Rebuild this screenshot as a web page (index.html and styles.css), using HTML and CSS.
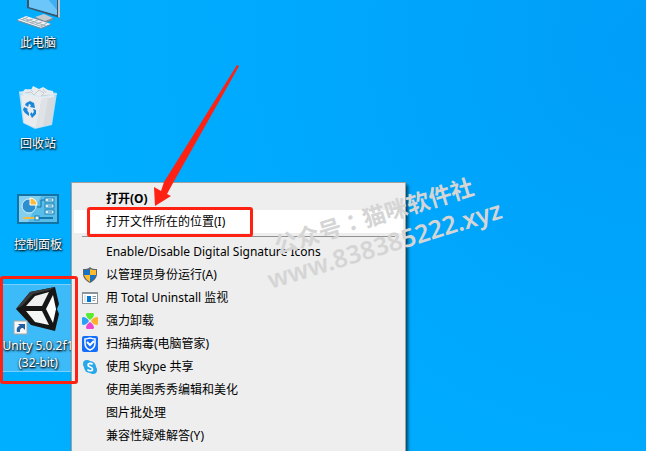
FILE: index.html
```html
<!DOCTYPE html>
<html lang="zh-CN">
<head>
    <meta charset="UTF-8">
    <meta name="viewport" content="width=device-width, initial-scale=1.0">
    <title>桌面</title>
    <link rel="stylesheet" href="styles.css">
</head>
<body>
    <main class="desktop">
        <div class="icons">
            <button class="shortcut">
                <svg class="shortcut-icon" viewBox="0 0 48 48" aria-hidden="true">
                    <polygon points="21,34 30,31 39,35 31,39" fill="#c3cbd1" />
                    <polygon points="21,34 31,38 39,35 39,37 31,40 21,36" fill="#7f8b94" />
                    <polygon points="13,0 46,6 46,35 13,25" fill="#3c5468" />
                    <polygon points="15,2 43,8 43,32 15,24" fill="#3bb0f5" />
                    <polygon points="15,2 24,4 43,27 43,32 15,24" fill="#6cc6fa" />
                    <polygon points="44,6 46,6 46,35 44,34" fill="#b9c2c8" />
                    <polygon points="3,37 12,33 37,41 27,45" fill="#eef1f3" />
                    <polygon points="3,37 27,45 37,41 37,42 27,46 3,38" fill="#7d8b96" />
                    <path d="M6 36 29 44M9 35 32 43M12 38 19 36M17 40 24 37M22 41 28 39M8 37 14 34M27 43 33 40" stroke="#a4b0b8" stroke-width="1" fill="none" />
                </svg>
                <span class="shortcut-label">此电脑</span>
            </button>

            <button class="shortcut">
                <svg class="shortcut-icon" viewBox="0 0 48 48" aria-hidden="true">
                    <polygon points="5,8 16,5 43,9 38,41 21,45 9,39" fill="#b9dff3" />
                    <polygon points="8,10 11,5 17,6 19,2 25,5 29,3 34,6 39,7 40,13 28,17 12,13" fill="#e9ecef" />
                    <path d="M11 9 17 8 20 11 25 6 30 9 27 12 36 11M17 6 19 8M29 5 32 9" stroke="#c3cad1" fill="none" />
                    <polygon points="7,11 28,15 22,44 10,39" fill="#e9ebee" />
                    <polygon points="28,15 41,13 37,40 22,44" fill="#d5dadf" />
                    <polygon points="28,15 34,15 29,42 22,44" fill="#dfe3e7" />
                    <path d="M5 8 28 13 43 10" stroke="#cfeaf7" fill="none" />
                    <g fill="#1a86d8">
                        <polygon points="12,19 16,17 20,19 21,24 16,23 17,21 15,20 14,23 11,21" />
                        <polygon points="10,23 14,25 13,26 15,29 15,32 11,29 9,26" />
                        <polygon points="19,25 22,26 22,30 19,33 18,34 16,30 18,28 18,30 20,28" />
                    </g>
                </svg>
                <span class="shortcut-label">回收站</span>
            </button>

            <button class="shortcut">
                <svg class="shortcut-icon" viewBox="0 0 48 48" aria-hidden="true">
                    <rect x="3" y="9" width="42" height="30" fill="#1273a6" />
                    <rect x="5" y="11" width="38" height="26" fill="#58bde9" />
                    <polygon points="5,11 27,11 14,37 5,37" fill="#83cff0" />
                    <circle cx="15" cy="21" r="7" fill="#2b8fd0" stroke="#d9f1fb" />
                    <path d="M16 20V13A7 7 0 0 1 23 20Z" fill="#ffb93b" stroke="#fff" stroke-width="1" />
                    <path d="M23 22H27V15H31M31 27H35" stroke="#166f9d" fill="none" />
                    <g fill="#d6f0fb" stroke="#1b83b6">
                        <rect x="31" y="13" width="9" height="4" />
                        <rect x="31" y="19" width="9" height="4" />
                        <rect x="31" y="25" width="9" height="4" />
                    </g>
                    <path d="M34 15H38M34 21H38M34 27H38" stroke="#1680bb" />
                    <path d="M9 33H22" stroke="#f4bc43" stroke-width="2" />
                    <path d="M24 33H39" stroke="#1479ad" stroke-width="2" />
                    <rect x="21" y="31" width="4" height="4" fill="#e5f6fd" stroke="#1680bb" />
                </svg>
                <span class="shortcut-label">控制面板</span>
            </button>

            <button class="shortcut selected">
                <svg class="shortcut-icon" viewBox="0 0 48 48" aria-hidden="true">
                    <polygon points="2,23 16,6 41,1 45,18 43,23 45,28 41,45 17,39" fill="#161616" />
                    <polygon points="2,23 16,6 41,1 36,4 19,8 8,20" fill="#3a3a3a" />
                    <polygon points="12,20 21,10 35,6 28,20" fill="#f0f0f0" />
                    <polygon points="12,25 28,25 35,39 21,36" fill="#f5f5f5" />
                    <polygon points="32,23 39,9 42,23 39,37" fill="#ffffff" />
                    <rect x="0" y="35" width="13" height="13" fill="#f7f7f7" stroke="#a8a8a8" />
                    <path d="M3 46C2 42 4 40 6 40L4 38H11V44L9 42C6 42 6 44 6 46Z" fill="#235f9e" />
                </svg>
                <span class="shortcut-label">Unity 5.0.2f1 (32-bit)</span>
            </button>
        </div>

        <div class="context-menu" role="menu">
            <button class="item default" role="menuitem">打开(O)</button>
            <button class="item active" role="menuitem">打开文件所在的位置(I)</button>
            <hr class="separator">
            <button class="item" role="menuitem">Enable/Disable Digital Signature Icons</button>
            <button class="item" role="menuitem">
                <svg class="item-icon" viewBox="0 0 16 16" aria-hidden="true">
                    <path d="M8 0C10 2 12 2 15 2V7C15 11 12 14 8 16C4 14 1 11 1 7V2C4 2 6 2 8 0Z" fill="#5d646b" />
                    <path d="M8 2V8H2V3C4 3 6 3 8 2Z" fill="#1673c4" />
                    <path d="M8 2C10 3 12 3 14 3V8H8Z" fill="#fdbb2d" />
                    <path d="M2 8H8V15C5 13 3 11 2 8Z" fill="#fdbb2d" />
                    <path d="M8 8H14C13 11 11 13 8 15Z" fill="#1673c4" />
                </svg>
                以管理员身份运行(A)
            </button>
            <button class="item" role="menuitem">
                <svg class="item-icon" viewBox="0 0 16 16" aria-hidden="true">
                    <rect x="0" y="2" width="16" height="12" fill="#8b939b" />
                    <rect x="1" y="4" width="14" height="9" fill="#fff" />
                    <rect x="5" y="6" width="4" height="6" fill="#0078d7" />
                    <path d="M10.500 6.500H14M10.500 8.500H14M10.500 10.500H13" stroke="#8b939b" />
                    <rect x="2" y="5" width="2" height="7" fill="#e3e6e9" />
                </svg>
                用 Total Uninstall 监视
            </button>
            <button class="item" role="menuitem">
                <svg class="item-icon" viewBox="0 0 16 16" aria-hidden="true">
                    <path d="M8 7C5 5 4 3 4 1C5 -1 7 0 8 0C9 0 11 -1 12 1C12 3 11 5 8 7Z" fill="#5bea2f" />
                    <path d="M9 8C11 5 13 4 15 4C17 5 16 7 16 8C16 9 17 11 15 12C13 12 11 11 9 8Z" fill="#ffb02e" />
                    <path d="M8 9C11 11 12 13 12 15C11 17 9 16 8 16C7 16 5 17 4 15C4 13 5 11 8 9Z" fill="#ee45cf" />
                    <path d="M7 8C5 11 3 12 1 12C-1 11 0 9 0 8C0 7 -1 5 1 4C3 4 5 5 7 8Z" fill="#2ba0f7" />
                </svg>
                强力卸载
            </button>
            <button class="item" role="menuitem">
                <svg class="item-icon" viewBox="0 0 16 16" aria-hidden="true">
                    <rect width="16" height="16" rx="2" fill="#146dfb" />
                    <path d="M3 3C5 3 7 2 8 2C9 2 11 3 13 3V7C13 10 11 13 8 14C5 13 3 10 3 7Z" fill="none" stroke="#fff" stroke-width="1.500" />
                    <path d="M5 6 8 9 12 5" fill="none" stroke="#fff" stroke-width="2" />
                </svg>
                扫描病毒(电脑管家)
            </button>
            <button class="item" role="menuitem">
                <svg class="item-icon" viewBox="0 0 16 16" aria-hidden="true">
                    <circle cx="8" cy="8" r="6" fill="#28a8ea" />
                    <circle cx="5" cy="5" r="4" fill="#28a8ea" />
                    <circle cx="11" cy="11" r="4" fill="#28a8ea" />
                    <path d="M10.500 5.500C9.500 4 6 4 6 6C6 8.500 10.500 7.500 10.500 10C10.500 12.500 6.500 12 5.500 10.500" fill="none" stroke="#fff" stroke-width="1.700" />
                </svg>
                使用 Skype 共享
            </button>
            <button class="item" role="menuitem">使用美图秀秀编辑和美化</button>
            <button class="item" role="menuitem">图片批处理</button>
            <button class="item" role="menuitem">兼容性疑难解答(Y)</button>
        </div>

        <!-- Red annotations over the desktop -->
        <div class="mark mark-shortcut"></div>
        <div class="mark mark-item"></div>
        <svg class="arrow" viewBox="0 0 86 144" aria-hidden="true">
            <polygon points="84,2 86,3 20,120 14,131 18,133 2,143 1,124 8,128 11,119" fill="#ff2112" />
        </svg>

        <div class="watermark">
            <div>公众号<span class="colon" lang="zh-TW">：</span>猫咪软件社</div>
            <div class="watermark-url">www.838385222.xyz</div>
        </div>
    </main>
</body>
</html>
```

FILE: styles.css
```css
body {
    margin: 0;
    font-family: "Noto Sans", "Noto Sans CJK SC", sans-serif;
    font-size: 12px;
    overflow: hidden;
}

button {
    border: none;
    background: none;
    font: inherit;
    color: inherit;
}

.desktop {
    position: relative;
    height: 100vh;
    overflow: hidden;
    background: radial-gradient(circle at 100% 10%, #009df8 0%, #00a5fb 30%, #00abfe 60%, #00afff 100%);
}

/* Desktop shortcuts, the first row is partly scrolled off */
.icons {
    display: flex;
    flex-direction: column;
    gap: 13px;
    width: 76px;
    margin-top: -19px;
}

.shortcut {
    display: flex;
    flex-direction: column;
    align-items: center;
    gap: 3px;
    height: 88px;
    padding: 1px 0;
    border: 1px solid transparent;
    color: #fff;
}

.shortcut.selected {
    background-color: #3dbaf8;
    border-color: #79d0fa;
}

.shortcut-icon {
    flex: none;
    width: 48px;
    height: 48px;
    overflow: visible;
}

.shortcut-label {
    line-height: 17px;
    text-align: center;
    text-shadow: 1px 1px 2px #000, 0 1px 2px rgba(0, 0, 0, 0.8);
}

/* Context menu */
.context-menu {
    position: absolute;
    top: 182px;
    left: 71px;
    width: 329px;
    padding: 4px 2px;
    border: 1px solid #a0a0a0;
    background-color: #eee;
    box-shadow: 2px 3px 3px rgba(0, 0, 0, 0.6);
    color: #000;
}

.item {
    display: flex;
    align-items: center;
    gap: 8px;
    width: 100%;
    height: 23px;
    padding: 0 8px 0 32px;
    line-height: 23px;
    text-align: left;
    white-space: nowrap;
}

.item:has(.item-icon) {
    padding-left: 8px;
}

.item.default {
    font-weight: bold;
}

.item.active {
    background-color: #fff;
}

.item-icon {
    flex: none;
    width: 16px;
    height: 16px;
}

.separator {
    height: 1px;
    margin: 3px 8px;
    border: none;
    background-color: #919191;
}

/* Annotations */
.mark {
    position: absolute;
    box-sizing: border-box;
    border: 3px solid #ff2112;
    border-radius: 3px;
}

.mark-shortcut {
    top: 276px;
    left: 0;
    width: 78px;
    height: 108px;
}

.mark-item {
    top: 207px;
    left: 87px;
    width: 166px;
    height: 30px;
}

.arrow {
    position: absolute;
    top: 63px;
    left: 153px;
    width: 86px;
    height: 144px;
}

.watermark {
    position: absolute;
    top: 199px;
    left: 258px;
    width: 240px;
    color: #d5d5d5;
    font-size: 23px;
    font-weight: 600;
    line-height: 30px;
    text-align: center;
    white-space: nowrap;
    transform: rotate(-17deg);
    pointer-events: none;
}

.watermark-url {
    font-size: 25px;
}

.colon {
    font-family: "Noto Sans CJK TC", sans-serif;
}
```
